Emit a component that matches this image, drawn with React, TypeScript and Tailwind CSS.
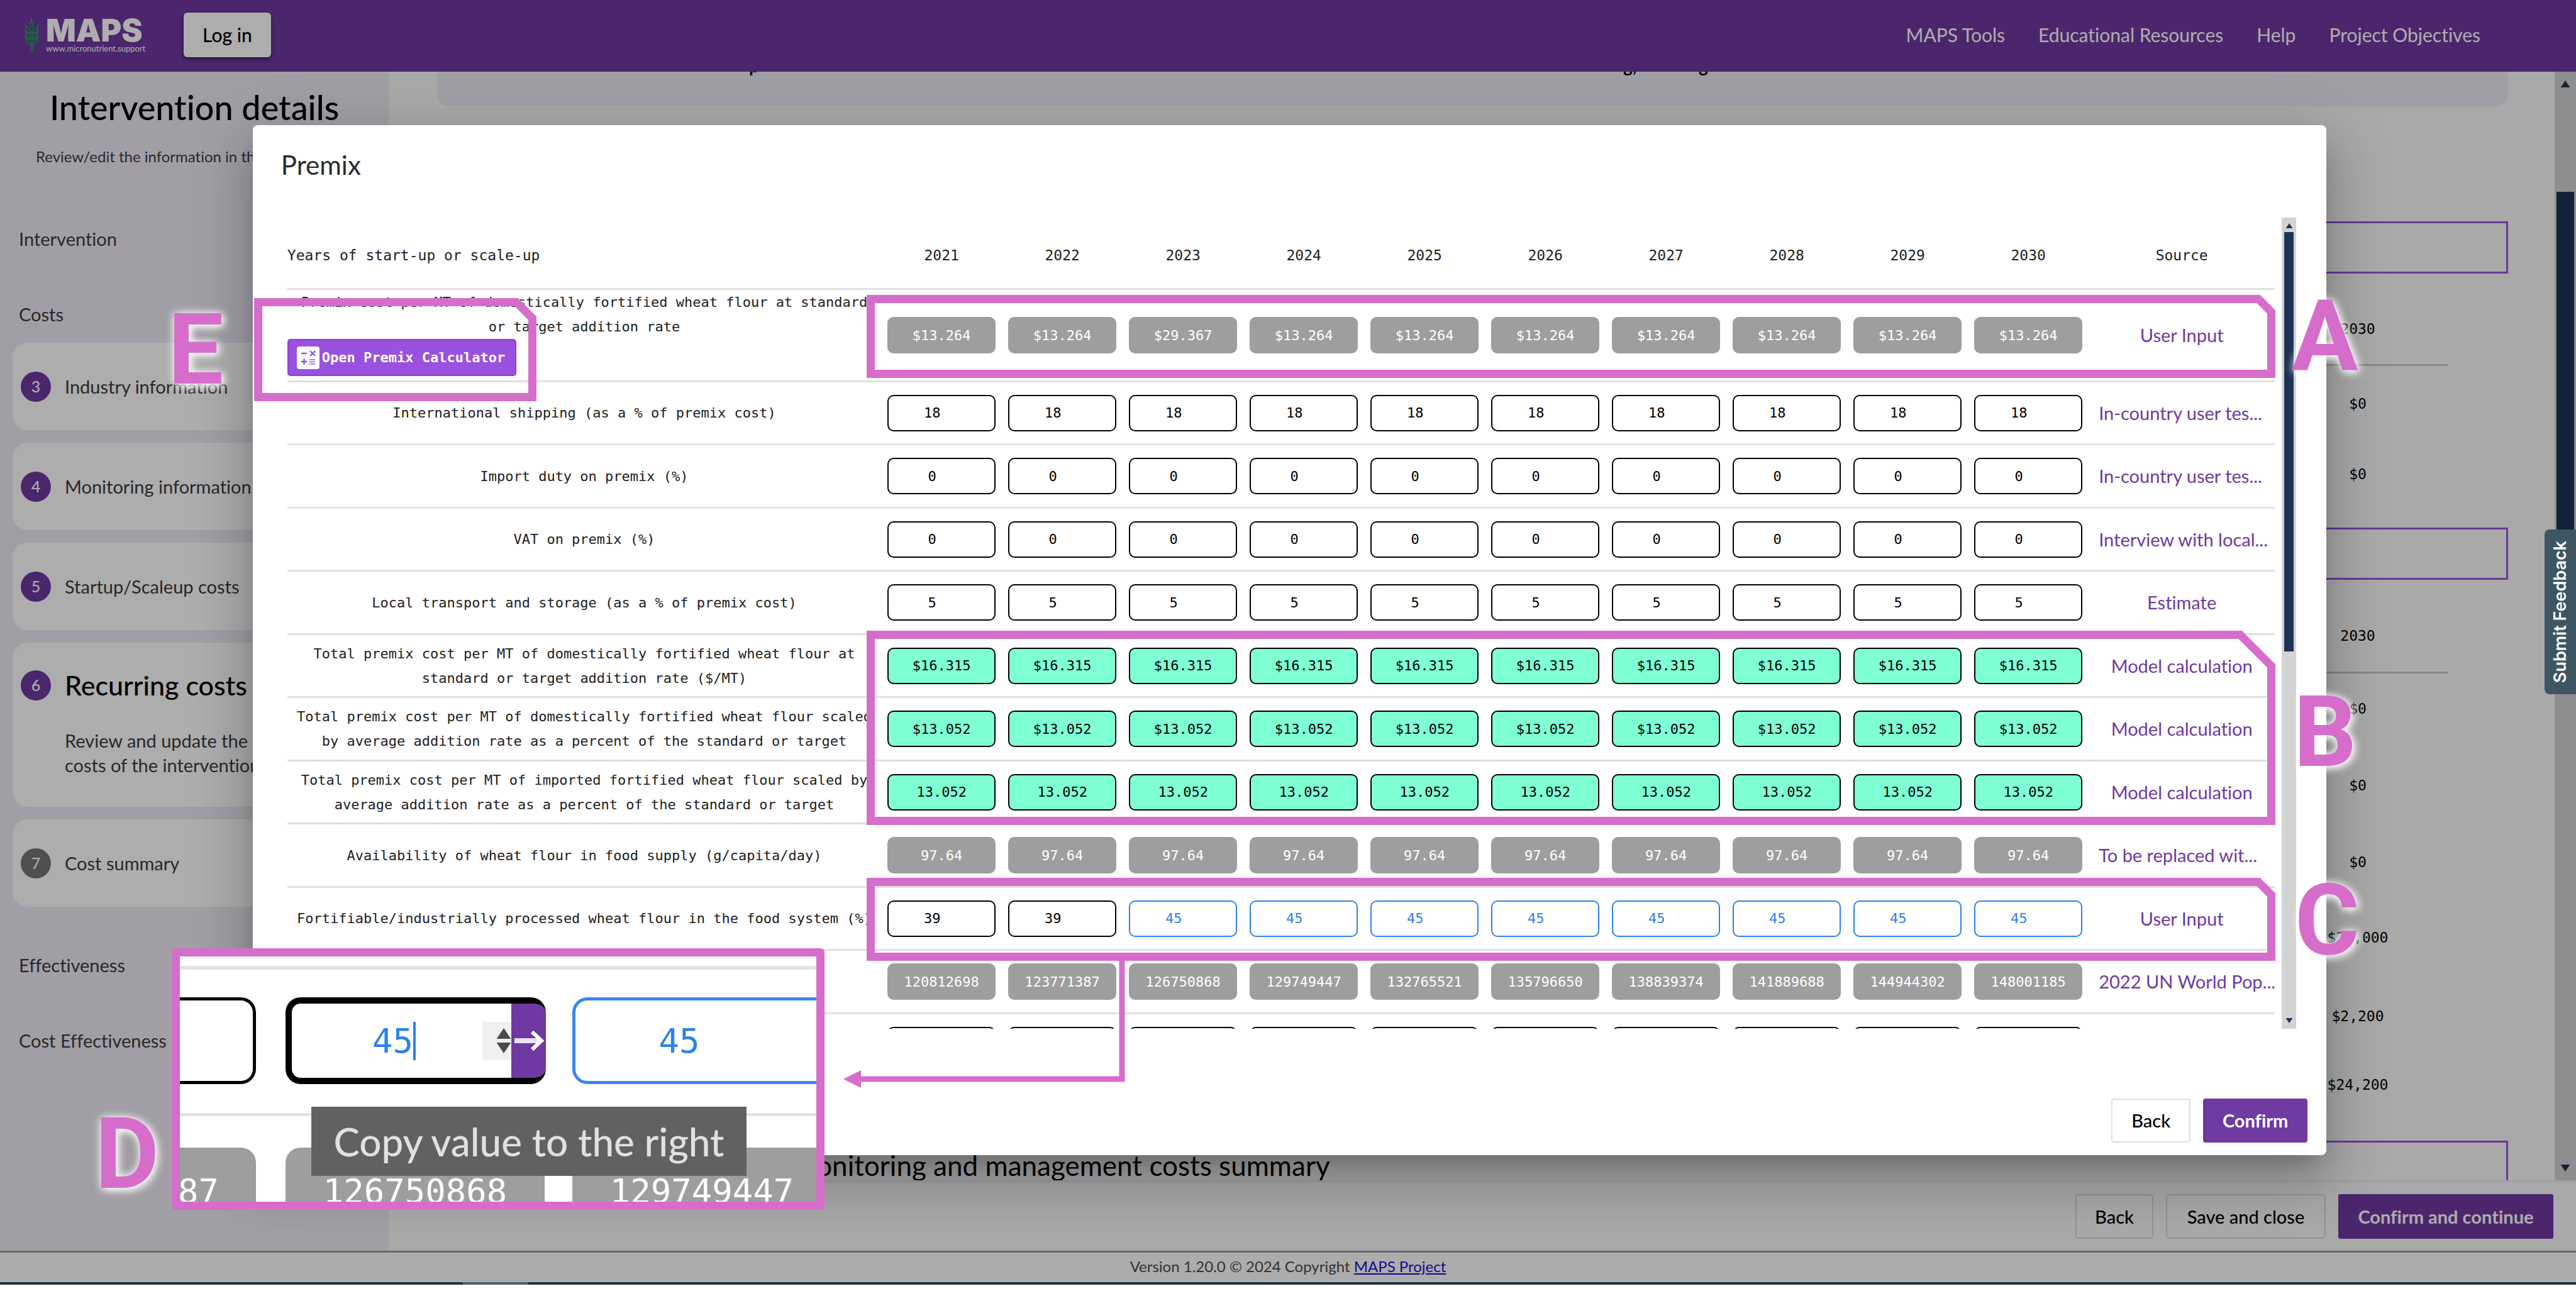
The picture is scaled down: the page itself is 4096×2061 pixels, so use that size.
import React from "react";

type Kind = "locked" | "input" | "calc" | "edited";

interface Row {
  label: string[];
  values: string[];
  kinds: Kind[];
  source: string;
  calculator?: boolean;
}

const YEARS = ["2021", "2022", "2023", "2024", "2025", "2026", "2027", "2028", "2029", "2030"];

const same = (value: string) => YEARS.map(() => value);
const all = (kind: Kind) => YEARS.map(() => kind);

const ROWS: Row[] = [
  {
    label: ["Premix cost per MT of domestically fortified wheat flour at standard", "or target addition rate"],
    values: ["$13.264", "$13.264", "$29.367", "$13.264", "$13.264", "$13.264", "$13.264", "$13.264", "$13.264", "$13.264"],
    kinds: all("locked"),
    source: "User Input",
    calculator: true,
  },
  { label: ["International shipping (as a % of premix cost)"], values: same("18"), kinds: all("input"), source: "In-country user tes..." },
  { label: ["Import duty on premix (%)"], values: same("0"), kinds: all("input"), source: "In-country user tes..." },
  { label: ["VAT on premix (%)"], values: same("0"), kinds: all("input"), source: "Interview with local..." },
  { label: ["Local transport and storage (as a % of premix cost)"], values: same("5"), kinds: all("input"), source: "Estimate" },
  {
    label: ["Total premix cost per MT of domestically fortified wheat flour at", "standard or target addition rate ($/MT)"],
    values: same("$16.315"),
    kinds: all("calc"),
    source: "Model calculation",
  },
  {
    label: ["Total premix cost per MT of domestically fortified wheat flour scaled", "by average addition rate as a percent of the standard or target"],
    values: same("$13.052"),
    kinds: all("calc"),
    source: "Model calculation",
  },
  {
    label: ["Total premix cost per MT of imported fortified wheat flour scaled by", "average addition rate as a percent of the standard or target"],
    values: same("13.052"),
    kinds: all("calc"),
    source: "Model calculation",
  },
  { label: ["Availability of wheat flour in food supply (g/capita/day)"], values: same("97.64"), kinds: all("locked"), source: "To be replaced wit..." },
  {
    label: ["Fortifiable/industrially processed wheat flour in the food system (%)"],
    values: ["39", "39", "45", "45", "45", "45", "45", "45", "45", "45"],
    kinds: ["input", "input", "edited", "edited", "edited", "edited", "edited", "edited", "edited", "edited"],
    source: "User Input",
  },
  {
    label: [""],
    values: ["120812698", "123771387", "126750868", "129749447", "132765521", "135796650", "138839374", "141889688", "144944302", "148001185"],
    kinds: all("locked"),
    source: "2022 UN World Pop...",
  },
  { label: [""], values: same(""), kinds: all("input"), source: "" },
];

const KIND_CLASS: Record<Kind, string> = {
  locked: "bg-[#9e9e9e] text-white border-[#9e9e9e]",
  input: "bg-white text-black border-black pr-[30px]",
  calc: "bg-[#7fffd4] text-black border-black",
  edited: "bg-white text-[#2f80ed] border-[#2f80ed] pr-[30px]",
};

function WheatLogo() {
  const leaves = [32, 50, 68];
  return (
    <svg viewBox="0 0 48 114" className="h-[58px] w-[25px]" aria-hidden="true">
      <g fill="#008741" stroke="#7fae95" strokeWidth="1.5">
        <path d="M24 4 V14" />
        <path d="M24 12 C31 20 31 28 24 34 C17 28 17 20 24 12Z" />
        {leaves.map((y) => (
          <g key={y}>
            <path d={`M22 ${y + 22} C8 ${y + 18} 5 ${y + 8} 6 ${y} C16 ${y + 3} 23 ${y + 10} 22 ${y + 22}Z`} />
            <path d={`M26 ${y + 22} C40 ${y + 18} 43 ${y + 8} 42 ${y} C32 ${y + 3} 25 ${y + 10} 26 ${y + 22}Z`} />
            <path d={`M6 ${y} L2 ${y - 8} M42 ${y} L46 ${y - 8}`} />
          </g>
        ))}
        <path d="M21 94 H27 V108 L24 112 L21 108Z" />
      </g>
    </svg>
  );
}

function CalculateIcon() {
  return (
    <svg viewBox="0 0 36 36" className="h-[36px] w-[36px]" aria-hidden="true">
      <rect width="36" height="36" rx="4" fill="#fff" />
      <g stroke="#9b51e0" strokeWidth="2.4">
        <path d="M7 11 H16" />
        <path d="M21 7 L29 15 M29 7 L21 15" />
        <path d="M7 24 H16 M11.500 19.500 V29" />
        <path d="M20 21 H29 M20 24.500 H29 M20 28 H29" strokeWidth="1.6" />
      </g>
    </svg>
  );
}

function Triangle({ up, className }: { up?: boolean; className: string }) {
  return (
    <svg viewBox="0 0 16 12" className={className} aria-hidden="true">
      <path d={up ? "M8 0 L16 12 H0Z" : "M0 0 H16 L8 12Z"} fill="currentColor" />
    </svg>
  );
}

function Header() {
  return (
    <header className="flex h-[114px] shrink-0 items-center bg-[#7138a1] pr-[152px] pb-[4px] pl-[38px]">
      <div className="flex items-center gap-[10px]">
        <WheatLogo />
        <div className="flex w-[156px] flex-col text-white">
          <span className="font-['Inter'] text-[50px] leading-[44px] font-black">MAPS</span>
          <span className="text-[13px] leading-[14px]">www.micronutrient.support</span>
        </div>
      </div>
      <button className="ml-[63px] h-[71px] w-[139px] rounded-[6px] bg-white text-[30px] font-medium text-black shadow-[0_3px_6px_rgba(0,0,0,0.5)]">
        Log in
      </button>
      <nav className="ml-auto flex gap-[53px] text-[30px] text-white">
        <a href="#tools">MAPS Tools</a>
        <a href="#resources">Educational Resources</a>
        <a href="#help">Help</a>
        <a href="#objectives">Project Objectives</a>
      </nav>
    </header>
  );
}

function Step({ n, label, done = true }: { n: string; label: string; done?: boolean }) {
  return (
    <li className="flex h-[139px] items-center gap-[22px] rounded-[24px] bg-white pl-[13px]">
      <span
        className={`flex h-[48px] w-[48px] items-center justify-center rounded-full text-[25px] font-medium text-white ${
          done ? "bg-[#7138a1]" : "bg-[#757575]"
        }`}
      >
        {n}
      </span>
      <span className="text-[29px] text-[#3c3c3c]">{label}</span>
    </li>
  );
}

function Sidebar() {
  return (
    <aside className="w-[618px] shrink-0 bg-[#eeeaf4] text-[#3c3c3c]">
      <h1 className="mt-[26px] text-center text-[54px] leading-[62px] font-medium text-black">Intervention details</h1>
      <p className="mt-[33px] pl-[57px] text-[24px] leading-[28px] whitespace-nowrap">Review/edit the information in the tabs</p>
      <p className="mt-[101px] pl-[30px] text-[29px] leading-[32px]">Intervention</p>
      <p className="mt-[88px] pl-[30px] text-[29px] leading-[32px]">Costs</p>
      <ol className="mt-[29px] flex flex-col gap-[20px] px-[20px]">
        <Step n="3" label="Industry information" />
        <Step n="4" label="Monitoring information" />
        <Step n="5" label="Startup/Scaleup costs" />
        <li className="h-[261px] rounded-[24px] bg-white pt-[44px] pl-[13px]">
          <div className="flex items-center gap-[22px]">
            <span className="flex h-[48px] w-[48px] items-center justify-center rounded-full bg-[#7138a1] text-[25px] font-medium text-white">6</span>
            <span className="text-[43px] leading-[48px] font-medium text-black">Recurring costs</span>
          </div>
          <p className="mt-[44px] pl-[70px] text-[29px] leading-[39px] whitespace-nowrap">
            Review and update the
            <br />
            costs of the intervention
          </p>
        </li>
        <Step n="7" label="Cost summary" done={false} />
      </ol>
      <p className="mt-[77px] pl-[30px] text-[29px] leading-[32px]">Effectiveness</p>
      <p className="mt-[88px] pl-[30px] text-[29px] leading-[32px]">Cost Effectiveness</p>
    </aside>
  );
}

function SummaryTable({ headClass, rows }: { headClass: string; rows: { value: string; height: string }[] }) {
  return (
    <table className="mt-[45px] w-[calc(100%-96px)] font-['DejaVu_Sans_Mono'] text-[23px] text-black">
      <thead>
        <tr className={headClass}>
          <td />
          <th scope="col" className="w-[286px] pb-[12px] text-center font-normal">
            2030
          </th>
        </tr>
      </thead>
      <tbody>
        {rows.map((row, i) => (
          <tr key={i} className={row.height}>
            <td />
            <td className="text-center">{row.value}</td>
          </tr>
        ))}
      </tbody>
    </table>
  );
}

function Main() {
  return (
    <main className="flex min-w-0 flex-1 flex-col bg-[#fafafa]">
      <div className="flex min-h-0 flex-1">
        <div className="min-w-0 flex-1 overflow-hidden pr-[74px] pl-[77px]">
          <div className="flex h-[55px] overflow-hidden rounded-b-[20px] bg-[#eeeaf4] pl-[496px] text-[28px] text-black">
            <div className="-mt-[24px] flex leading-[28px] font-bold">
              <span className="w-[1390px]">p</span>
              <span className="w-[120px]">g,</span>
              <span>g</span>
            </div>
          </div>
          <div className="mt-[183px] h-[83px] border-[3px] border-[#9b51e0]" />
          <SummaryTable
            headClass="h-[100px] border-b-[3px] border-[#c8c8c8]"
            rows={[
              { value: "$0", height: "h-[122px]" },
              { value: "$0", height: "h-[104px]" },
            ]}
          />
          <div className="mt-[33px] h-[83px] border-[3px] border-[#9b51e0]" />
          <SummaryTable
            headClass="h-[102px] border-b-[3px] border-[#c8c8c8]"
            rows={[
              { value: "$0", height: "h-[114px]" },
              { value: "$0", height: "h-[132px]" },
              { value: "$0", height: "h-[112px]" },
              { value: "$22,000", height: "h-[128px]" },
              { value: "$2,200", height: "h-[122px]" },
              { value: "$24,200", height: "h-[96px]" },
            ]}
          />
          <div className="mt-[41px] h-[120px] border-[3px] border-[#9b51e0] pt-[12px] pl-[560px]">
            <h2 className="text-[44px] leading-[48px] text-black">Monitoring and management costs summary</h2>
          </div>
        </div>
        <div className="flex w-[34px] shrink-0 flex-col items-center bg-[#d1d1d1] py-[14px] text-[#1d3354]">
          <Triangle up className="h-[11px] w-[16px]" />
          <div className="mt-[166px] h-[680px] w-[28px] bg-[#1d3354]" />
          <Triangle className="mt-auto h-[11px] w-[16px]" />
        </div>
      </div>
      <div className="flex h-[112px] shrink-0 items-center justify-end gap-[20px] border-t-[3px] border-[#eeeaf4] pr-[36px] text-[29px]">
        <button className="h-[71px] w-[124px] rounded-[6px] border-2 border-[#d8d8d8] font-medium text-black">Back</button>
        <button className="h-[71px] w-[254px] rounded-[6px] border-2 border-[#d8d8d8] font-medium text-black">Save and close</button>
        <button className="h-[71px] w-[342px] rounded-[3px] bg-[#7138a1] font-bold text-white">Confirm and continue</button>
      </div>
    </main>
  );
}

function PremixTable() {
  return (
    <table className="w-full table-fixed border-collapse font-['DejaVu_Sans_Mono',monospace] text-[22px]">
      <colgroup>
        <col />
        {YEARS.map((y) => (
          <col key={y} className="w-[192px]" />
        ))}
        <col className="w-[296px]" />
      </colgroup>
      <thead>
        <tr className="h-[114px] border-b-[3px] border-[#e0e0e0] text-[23px] text-[#212121]">
          <th scope="col" className="pt-[8px] text-left font-normal">
            Years of start-up or scale-up
          </th>
          {YEARS.map((y) => (
            <th key={y} scope="col" className="pt-[8px] font-normal">
              {y}
            </th>
          ))}
          <th scope="col" className="pt-[8px] font-normal">
            Source
          </th>
        </tr>
      </thead>
      <tbody>
        {ROWS.map((row, i) => (
          <tr
            key={i}
            className={`border-b-[3px] border-[#e0e0e0] ${row.calculator ? "h-[147px]" : i % 2 ? "h-[100px]" : "h-[101px]"}`}
          >
            <th scope="row" className="p-0 text-center leading-[39px] font-normal whitespace-nowrap text-[#212121]">
              {row.label.map((line, j) => (
                <div key={j}>{line}</div>
              ))}
              {row.calculator && (
                <button className="mb-[7px] flex h-[59px] w-[364px] items-center gap-[4px] rounded-[5px] border-2 border-[#8a43cc] bg-[#9b51e0] pl-[13px] font-bold text-white">
                  <CalculateIcon />
                  Open Premix Calculator
                </button>
              )}
            </th>
            {row.values.map((value, c) => (
              <td key={c} className="px-[10px] py-0">
                <input
                  aria-label={`${row.label[0]} ${YEARS[c]}`}
                  defaultValue={value}
                  readOnly={row.kinds[c] === "locked" || row.kinds[c] === "calc"}
                  className={`block h-[58px] w-full rounded-[10px] border-2 text-center ${KIND_CLASS[row.kinds[c]]}`}
                />
              </td>
            ))}
            <td className="px-[16px] py-0 font-['Lato'] text-[29px] whitespace-nowrap text-[#6f3aa1]">
              <a href="#source" className={`block ${row.source.endsWith("...") ? "text-left" : "text-center"}`}>
                {row.source}
              </a>
            </td>
          </tr>
        ))}
      </tbody>
    </table>
  );
}

function PremixDialog() {
  return (
    <div
      role="dialog"
      aria-label="Premix"
      className="flex h-[1638px] w-[80.6%] flex-col rounded-[8px] bg-white pr-[30px] pb-[20px] pl-[55px] shadow-[0_22px_32px_-14px_rgba(0,0,0,0.2),0_50px_80px_6px_rgba(0,0,0,0.14),0_18px_96px_16px_rgba(0,0,0,0.12)]"
    >
      <h2 className="mt-[38px] -ml-[10px] text-[42px] leading-[50px] text-[#2c2c2c]">Premix</h2>
      <div className="mt-[59px] mr-[18px] flex h-[1290px] gap-[11px] overflow-hidden">
        <div className="min-w-0 flex-1">
          <PremixTable />
        </div>
        <div className="flex w-[23px] shrink-0 flex-col items-center bg-[#d3d3d3] pt-[9px] pb-[9px] text-[#1d3354]">
          <Triangle up className="h-[8px] w-[12px]" />
          <div className="mt-[6px] h-[667px] w-[15px] bg-[#1d3354]" />
          <Triangle className="mt-auto h-[8px] w-[12px]" />
        </div>
      </div>
      <div className="mt-auto flex justify-end gap-[20px] text-[29px]">
        <button className="h-[70px] w-[126px] rounded-[4px] border-2 border-[#e0e0e0] font-medium text-black">Back</button>
        <button className="h-[70px] w-[166px] rounded-[4px] bg-[#6f3aa1] font-bold text-white">Confirm</button>
      </div>
    </div>
  );
}

function Snip({ className, w, h, cut }: { className: string; w: number; h: number; cut: number }) {
  const a = 6.5;
  return (
    <svg viewBox={`0 0 ${w} ${h}`} className={`pointer-events-none absolute ${className}`} aria-hidden="true">
      <path
        d={`M${a} ${a} H${w - cut - 3} L${w - a} ${cut + 3} V${h - a} H${a}Z`}
        fill="none"
        stroke="#d66dcb"
        strokeWidth="13"
        strokeLinejoin="miter"
      />
    </svg>
  );
}

function Letter({ className, children }: { className: string; children: string }) {
  return (
    <span
      className={`absolute font-['Roboto'] text-[157px] leading-none font-bold text-[#d66dcb] [text-shadow:4px_4px_14px_rgba(255,255,255,0.9),0_0_14px_rgba(255,255,255,0.9)] ${className}`}
    >
      {children}
    </span>
  );
}

function DetailInset() {
  return (
    <div className="absolute top-[1508px] left-[273px] h-[416px] w-[1038px] overflow-hidden rounded-[6px] border-[13px] border-[#d66dcb] bg-white pt-[15px] font-['DejaVu_Sans_Mono',monospace] text-[54px]">
      <hr className="h-[6px] border-0 bg-[#e2e2e2]" />
      <div className="mt-[44px] flex h-[138px]">
        <div className="w-[121px] shrink-0 rounded-r-[24px] border-[5px] border-l-0 border-black" />
        <div className="relative ml-[47px] flex w-[414px] shrink-0 items-center overflow-hidden rounded-[24px] border-[10px] border-r-0 border-black">
          <span className="flex w-[321px] shrink-0 items-center justify-center text-[#2f80ed]">
            45
            <span className="-mr-[4px] h-[61px] w-[4px] bg-[#2f80ed]" />
          </span>
          <span className="-ml-[18px] flex h-[61px] w-[46px] shrink-0 flex-col items-end justify-center gap-[6px] bg-[#f0f0f0] text-[#4a4a4a]">
            <Triangle up className="h-[17px] w-[24px]" />
            <Triangle className="h-[17px] w-[24px]" />
          </span>
          <button aria-label="Copy value to the right" className="absolute -top-[10px] right-0 flex h-[138px] w-[55px] items-center justify-center bg-[#7038a3]">
            <svg viewBox="0 0 50 34" className="h-[34px] w-[50px]" fill="none" stroke="#fff" aria-hidden="true">
              <path d="M2 17 H44" strokeWidth="8" strokeOpacity="0.85" />
              <path d="M30 3 L45 17 L30 31" strokeWidth="6" />
            </svg>
          </button>
        </div>
        <div className="ml-[42px] flex w-[414px] shrink-0 items-center justify-center rounded-[24px] border-[5px] border-[#3a86ee] pr-[74px] text-[#2f80ed]">
          45
        </div>
      </div>
      <hr className="mt-[46px] h-[5px] border-0 bg-[#e2e2e2]" />
      <div className="mt-[50px] flex h-[138px] text-white">
        <div className="flex w-[121px] shrink-0 items-center justify-end rounded-tr-[24px] bg-[#9e9e9e] pr-[59px]">87</div>
        <div className="ml-[47px] flex w-[412px] shrink-0 items-center justify-center rounded-t-[24px] bg-[#9e9e9e]">126750868</div>
        <div className="ml-[44px] flex w-[412px] shrink-0 items-center justify-center rounded-t-[24px] bg-[#9e9e9e]">129749447</div>
      </div>
      <div
        role="tooltip"
        className="absolute top-[239px] left-[209px] flex h-[110px] w-[692px] items-center justify-center bg-[#616161] font-['Lato'] text-[62px] font-medium text-[#e0e0e0]"
      >
        Copy value to the right
      </div>
    </div>
  );
}

function Annotations() {
  return (
    <>
      <Snip className="top-[474px] left-[404px] h-[164px] w-[449px]" w={449} h={164} cut={29} />
      <Snip className="top-[469px] left-[1378px] h-[132px] w-[2240px]" w={2240} h={132} cut={24} />
      <Snip className="top-[1003px] left-[1378px] h-[309px] w-[2240px]" w={2240} h={309} cut={53} />
      <Snip className="top-[1396px] left-[1378px] h-[132px] w-[2240px]" w={2240} h={132} cut={24} />
      <svg viewBox="0 0 450 210" className="absolute top-[1524px] left-[1340px] h-[210px] w-[450px]" aria-hidden="true">
        <path d="M444 0 V192 H26" fill="none" stroke="#d66dcb" strokeWidth="9" />
        <path d="M1 192 L29 178 V206Z" fill="#d66dcb" />
      </svg>
      <DetailInset />
      <Letter className="top-[457px] left-[3644px]">A</Letter>
      <Letter className="top-[1086px] left-[3647px]">B</Letter>
      <Letter className="top-[1385px] left-[3649px]">C</Letter>
      <Letter className="top-[1757px] left-[151px]">D</Letter>
      <Letter className="top-[478px] left-[267px]">E</Letter>
    </>
  );
}

export default function App() {
  return (
    <div className="relative flex h-screen flex-col overflow-hidden bg-white font-['Lato',sans-serif] [font-variant-ligatures:none]">
      <Header />
      <div className="flex min-h-0 flex-1">
        <Sidebar />
        <Main />
      </div>
      <footer className="flex h-[50px] shrink-0 items-center justify-center border-t-[3px] border-[#9a9a9a] bg-[#fefefe] pb-[4px] text-[24px] text-[#4a4a4a]">
        <p>
          Version 1.20.0 © 2024 Copyright{" "}
          <a href="#project" className="text-[#1a0dcc] underline">
            MAPS Project
          </a>
        </p>
      </footer>
      <div className="flex h-[22px] shrink-0 flex-col">
        <div className="h-[4px] bg-[#1c3140]">
          <div className="ml-[736px] h-[4px] w-[104px] bg-[#50626b]" />
        </div>
      </div>
      <div className="absolute inset-x-0 top-0 bottom-[22px] flex items-center justify-center bg-black/32 pb-[4px] pl-[5px]">
        <PremixDialog />
      </div>
      <button className="absolute top-[842px] right-0 flex h-[262px] w-[50px] items-center justify-center rounded-l-[8px] bg-[#3e5661] font-['Inter'] text-[27px] font-semibold text-white">
        <span className="rotate-180 whitespace-nowrap [writing-mode:vertical-rl]">Submit Feedback</span>
      </button>
      <Annotations />
    </div>
  );
}
